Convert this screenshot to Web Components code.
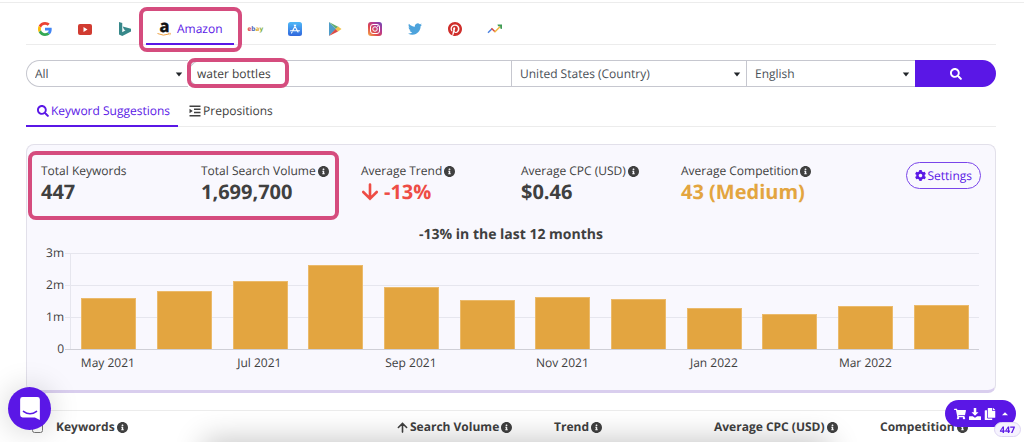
<!DOCTYPE html>
<html lang="en">
<head>
<meta charset="utf-8">
<title>Keyword research</title>
<style>
  html { scrollbar-width: none; }
  body { margin: 0; background: #fff; color: #404040; font: 12px/18px "Open Sans", sans-serif; text-rendering: geometricPrecision; overflow-x: hidden; }
</style>
</head>
<body>
<keyword-app></keyword-app>
<script>
const SEARCH = '<path fill="currentColor" d="M505 442.7L405.3 343c-4.5-4.5-10.6-7-17-7H372c27.6-35.3 44-79.7 44-128C416 93.1 322.9 0 208 0S0 93.1 0 208s93.1 208 208 208c48.3 0 92.7-16.4 128-44v16.3c0 6.4 2.5 12.5 7 17l99.7 99.7c9.4 9.4 24.6 9.4 33.9 0l28.3-28.3c9.4-9.4 9.4-24.6.1-34zM208 336c-70.7 0-128-57.2-128-128 0-70.7 57.2-128 128-128 70.7 0 128 57.2 128 128 0 70.7-57.2 128-128 128z"/>';
const ICONS = {
  google: ['0 0 48 48', '<path fill="#EA4335" d="M24 9.5c3.54 0 6.71 1.22 9.21 3.6l6.85-6.85C35.9 2.38 30.47 0 24 0 14.62 0 6.51 5.38 2.56 13.22l7.98 6.19C12.43 13.72 17.74 9.5 24 9.5z"/><path fill="#4285F4" d="M46.98 24.55c0-1.57-.15-3.09-.38-4.55H24v9.02h12.94c-.58 2.96-2.26 5.48-4.78 7.18l7.73 6c4.51-4.18 7.09-10.36 7.09-17.65z"/><path fill="#FBBC05" d="M10.53 28.59c-.48-1.45-.76-2.99-.76-4.59s.27-3.14.76-4.59l-7.98-6.19C.92 16.46 0 20.12 0 24c0 3.88.92 7.54 2.56 10.78l7.97-6.19z"/><path fill="#34A853" d="M24 48c6.48 0 11.93-2.13 15.89-5.81l-7.73-6c-2.15 1.45-4.92 2.3-8.16 2.3-6.26 0-11.57-4.22-13.47-9.91l-7.98 6.19C6.51 42.62 14.62 48 24 48z"/>'],
  youtube: ['0 0 28 28', '<rect y="4" width="28" height="22" rx="4" fill="#d13b31"/><path fill="#fff" d="M11 10v10l8-5z"/>'],
  bing: ['0 0 28 28', '<path fill="#37888a" d="M2 0l6.500 2v18.500l6.500-4-3-1.500-2.500-6L26 13.500V19L8.500 28 2 25z"/>'],
  amazon: ['0 0 28 28', '<text x="5" y="20" font-family="Open Sans" font-weight="700" font-size="33" fill="#111" stroke="#111">a</text><path d="M1 23q12 6 23 1" fill="none" stroke="#f0a345" stroke-width="2"/><path d="M22 22.500h5l-1.500 4" fill="none" stroke="#f0a345" stroke-width="1.500"/>'],
  ebay: ['0 0 28 28', '<text x="-1" y="18" font-family="Open Sans" font-weight="700" font-size="13"><tspan fill="#d8474d">e</tspan><tspan fill="#4a63b5">b</tspan><tspan fill="#dfae31">a</tspan><tspan fill="#7fae3f">y</tspan></text>'],
  appstore: ['0 0 28 28', '<defs><linearGradient id="g" x2="0" y2="1"><stop stop-color="#4fb8f7"/><stop offset="1" stop-color="#3067dd"/></linearGradient></defs><rect width="28" height="28" rx="5" fill="url(#g)"/><path d="M15.500 6L9 18M12.500 6l7.500 14M5 17.500h12M20 17.500h3M8 20.500l-1 1.500" stroke="#fff" stroke-width="2.200" stroke-linecap="round"/>'],
  play: ['0 0 28 28', '<path fill="#4f9dca" d="M2 0v28l14-14z"/><path fill="#63ad72" d="M2 0l19 10-5 4z"/><path fill="#f0c44c" d="M20 9l7 5-7 5-5-5z"/><path fill="#dc4b45" d="M2 28l18-9-5-5z"/>'],
  instagram: ['0 0 28 28', '<defs><linearGradient id="g" x1="0" y1="1" x2="1" y2="0"><stop stop-color="#f6b14c"/><stop offset=".35" stop-color="#e04a4d"/><stop offset=".65" stop-color="#b53a91"/><stop offset="1" stop-color="#6a49b8"/></linearGradient></defs><rect width="28" height="28" rx="6" fill="url(#g)"/><rect x="5" y="5" width="18" height="18" rx="5" fill="none" stroke="#fff" stroke-width="2"/><circle cx="14" cy="14" r="4.500" fill="none" stroke="#fff" stroke-width="2"/><circle cx="19.500" cy="8.500" r="1.300" fill="#fff"/>'],
  twitter: ['0 0 24 24', '<path fill="#4da3dc" d="M23.953 4.570a10 10 0 01-2.825.775 4.958 4.958 0 002.163-2.723c-.951.555-2.005.959-3.127 1.184a4.920 4.920 0 00-8.384 4.482C7.690 8.095 4.067 6.130 1.640 3.162a4.822 4.822 0 00-.666 2.475c0 1.710.870 3.213 2.188 4.096a4.904 4.904 0 01-2.228-.616v.060a4.923 4.923 0 003.946 4.827 4.996 4.996 0 01-2.212.085 4.936 4.936 0 004.604 3.417 9.867 9.867 0 01-6.102 2.105c-.390 0-.779-.023-1.170-.067a13.995 13.995 0 007.557 2.209c9.053 0 13.998-7.496 13.998-13.985 0-.210 0-.420-.015-.630A9.935 9.935 0 0024 4.590z"/>'],
  pinterest: ['0 8 496 496', '<path fill="#cf2e2b" d="M496 256c0 137-111 248-248 248-25.6 0-50.2-3.9-73.4-11.1 10.1-16.5 25.2-43.5 30.8-65 3-11.6 15.4-59 15.4-59 8.1 15.4 31.7 28.5 56.8 28.5 74.8 0 128.7-68.8 128.7-154.3 0-81.9-66.9-143.2-152.900-143.2-107 0-163.9 71.8-163.9 150.1 0 36.4 19.4 81.7 50.3 96.1 4.7 2.2 7.2 1.2 8.3-3.3.8-3.4 5-20.3 6.9-28.1.6-2.500.3-4.7-1.7-7.1-10.1-12.5-18.3-35.3-18.3-56.6 0-54.7 41.4-107.6 112-107.6 60.9 0 103.6 41.5 103.6 100.9 0 67.1-33.9 113.6-78 113.6-24.3 0-42.6-20.1-36.7-44.8 7-29.5 20.5-61.3 20.5-82.6 0-19-10.2-34.9-31.4-34.9-24.9 0-44.9 25.7-44.9 60.2 0 22 7.4 36.8 7.4 36.8s-24.5 103.8-29 123.2c-5 21.4-3 51.6-.9 71.2C65.4 450.9 0 361.1 0 256 0 119 111 8 248 8s248 111 248 248z"/>'],
  trends: ['0 0 28 28', '<g fill="none" stroke-width="3"><path stroke="#4a80e0" d="M0 21.500l8-8"/><path stroke="#dd4b3e" d="M7 12.500l7 7"/><path stroke="#efb83d" d="M13 20.500L25 8.500"/></g><path fill="#3f9c56" d="M19 5h9v9l-3.500-1v-4.500H20z"/>'],
  search: ['0 0 512 512', SEARCH],
  indent: ['0 0 24 24', '<path fill="currentColor" d="M1 1h22v3H1zM10 7h13v3H10zM10 13.500h13v3H10zM1 20h22v3H1zM1 7.500l6.500 4.500L1 16.500z"/>'],
  info: ['8 8 496 496', '<path fill="currentColor" d="M256 8C119.043 8 8 119.083 8 256c0 136.997 111.043 248 248 248s248-111.003 248-248C504 119.083 392.957 8 256 8zm0 110c23.196 0 42 18.804 42 42s-18.804 42-42 42-42-18.804-42-42 18.804-42 42-42zm56 254c0 6.627-5.373 12-12 12h-88c-6.627 0-12-5.373-12-12v-24c0-6.627 5.373-12 12-12h12v-64h-12c-6.627 0-12-5.373-12-12v-24c0-6.627 5.373-12 12-12h64c6.627 0 12 5.373 12 12v100h12c6.627 0 12 5.373 12 12v24z"/>'],
  cog: ['8 8 496 496', '<path fill="currentColor" d="M487.4 315.7l-42.6-24.6c4.3-23.2 4.3-47 0-70.2l42.6-24.6c4.9-2.8 7.1-8.6 5.5-14-11.1-35.6-30-67.8-54.7-94.6-3.8-4.1-10-5.1-14.8-2.3L380.8 110c-17.9-15.4-38.5-27.3-60.8-35.1V25.8c0-5.6-3.9-10.5-9.4-11.7-36.7-8.2-74.3-7.8-109.2 0-5.5 1.2-9.4 6.1-9.4 11.7V75c-22.2 7.9-42.8 19.8-60.8 35.1L88.7 85.5c-4.9-2.8-11-1.9-14.8 2.3-24.7 26.7-43.6 58.9-54.7 94.6-1.7 5.4.6 11.2 5.5 14L67.3 221c-4.3 23.2-4.3 47 0 70.2l-42.6 24.6c-4.9 2.8-7.1 8.6-5.5 14 11.1 35.6 30 67.8 54.7 94.6 3.8 4.1 10 5.1 14.8 2.3l42.6-24.6c17.9 15.4 38.5 27.3 60.8 35.1v49.2c0 5.6 3.9 10.5 9.4 11.7 36.7 8.2 74.3 7.8 109.2 0 5.5-1.2 9.4-6.1 9.4-11.7v-49.2c22.2-7.9 42.8-19.8 60.8-35.1l42.6 24.6c4.9 2.8 11 1.9 14.8-2.3 24.7-26.7 43.6-58.9 54.7-94.6 1.5-5.5-.7-11.3-5.6-14.1zM256 336c-44.1 0-80-35.9-80-80s35.9-80 80-80 80 35.9 80 80-35.9 80-80 80z"/>'],
  down: ['0 0 24 24', '<path d="M12 2v19M3 12l9 9 9-9" fill="none" stroke="currentColor" stroke-width="3.500" stroke-linecap="round"/>'],
  up: ['0 0 24 24', '<path d="M12 22V3M3 12l9-9 9 9" fill="none" stroke="currentColor" stroke-width="3.500" stroke-linecap="round"/>'],
  cart: ['0 0 576 512', '<path fill="currentColor" d="M528.12 301.319l47.273-208C578.806 78.301 567.391 64 551.99 64H159.208l-9.166-44.81C147.758 8.021 137.93 0 126.529 0H24C10.745 0 0 10.745 0 24v16c0 13.255 10.745 24 24 24h69.883l70.248 343.435C147.325 417.1 136 435.222 136 456c0 30.928 25.072 56 56 56s56-25.072 56-56c0-15.674-6.447-29.835-16.824-40h209.647C430.447 426.165 424 440.326 424 456c0 30.928 25.072 56 56 56s56-25.072 56-56c0-22.172-12.888-41.332-31.579-50.405l5.517-24.276c3.413-15.018-8.002-29.319-23.403-29.319H218.117l-6.545-32h293.145c11.206 0 20.92-7.754 23.403-18.681z"/>'],
  download: ['0 0 24 24', '<path fill="currentColor" d="M9.500 0h5v8.500H19l-7 7-7-7h4.500zM1 16.500h6.500l4.500 3 4.500-3H23a1 1 0 011 1V23a1 1 0 01-1 1H1a1 1 0 01-1-1v-5.500a1 1 0 011-1z"/>'],
  copy: ['0 0 448 512', '<path fill="currentColor" d="M320 448v40c0 13.255-10.745 24-24 24H24c-13.255 0-24-10.745-24-24V120c0-13.255 10.745-24 24-24h72v296c0 30.879 25.121 56 56 56h168zm0-344V0H152c-13.255 0-24 10.745-24 24v368c0 13.255 10.745 24 24 24h272c13.255 0 24-10.745 24-24V128H344c-13.2 0-24-10.8-24-24zm120.971-31.029L375.029 7.029A24 24 0 0 0 358.059 0H352v96h96v-6.059a24 24 0 0 0-7.029-16.97z"/>'],
  caretdown: ['0 0 10 10', '<path fill="#212529" d="M1 3h8L5 8z"/>'],
  caretup: ['0 0 10 10', '<path fill="currentColor" d="M0 7h10L5 2z"/>'],
  chat: ['0 0 24 28', '<path fill="#fff" d="M3 0h18a3 3 0 013 3v25l-6-3H3a3 3 0 01-3-3V3a3 3 0 013-3z"/><path d="M4 17.500q8 6 16 0" fill="none" stroke="#5a17e6" stroke-width="1.800" stroke-linecap="round"/>']
};

function define(name, html, setup) {
  const template = document.createElement('template');
  template.innerHTML = html;
  customElements.define(name, class extends HTMLElement {
    connectedCallback() {
      if (this.shadowRoot) return;
      this.attachShadow({ mode: 'open' }).append(template.content.cloneNode(true));
      if (setup) setup(this, this.shadowRoot);
    }
  });
}

define('kw-icon', `<style>
  :host { display: inline-block; width: 12px; height: 12px; flex: none; }
  svg { display: block; width: 100%; height: 100%; overflow: visible; }
</style><svg aria-hidden="true"></svg>`, (host, root) => {
  const [box, body] = ICONS[host.getAttribute('name')];
  const svg = root.querySelector('svg');
  svg.setAttribute('viewBox', box);
  svg.innerHTML = body;
});

/* Rounded outline drawn around the slotted content */
define('kw-highlight', `<style>
  :host { display: block; position: relative; }
  :host::after { content: ""; position: absolute; inset: var(--mark-inset); border: 4px solid #d54c7e; border-radius: 8px; pointer-events: none; z-index: 1; }
</style><slot></slot>`);

define('kw-engines', `<style>
  :host { display: block; border-top: 1px solid #ececec; padding: 12px 28px 0 26px; }
  nav { display: flex; gap: 2px; border-bottom: 1px solid #ececec; }
  a { box-sizing: border-box; display: flex; align-items: center; justify-content: center; gap: 6px; min-width: 38px; height: 30px; padding: 0 11px; border-bottom: 2px solid transparent; margin-bottom: -1px; color: #5a17e6; text-decoration: none; }
  a.on { border-color: #5a17e6; }
  kw-icon { width: 14px; height: 14px; }
  kw-highlight { --mark-inset: -8px -8px -8px -7px; }
</style>
<nav aria-label="Search engine">
  <a href="#google" aria-label="Google"><kw-icon name="google"></kw-icon></a>
  <a href="#youtube" aria-label="YouTube"><kw-icon name="youtube"></kw-icon></a>
  <a href="#bing" aria-label="Bing"><kw-icon name="bing"></kw-icon></a>
  <kw-highlight><a class="on" href="#amazon"><kw-icon name="amazon"></kw-icon>Amazon</a></kw-highlight>
  <a href="#ebay" aria-label="eBay"><kw-icon name="ebay"></kw-icon></a>
  <a href="#appstore" aria-label="App Store"><kw-icon name="appstore"></kw-icon></a>
  <a href="#play" aria-label="Google Play"><kw-icon name="play"></kw-icon></a>
  <a href="#instagram" aria-label="Instagram"><kw-icon name="instagram"></kw-icon></a>
  <a href="#twitter" aria-label="Twitter"><kw-icon name="twitter"></kw-icon></a>
  <a href="#pinterest" aria-label="Pinterest"><kw-icon name="pinterest"></kw-icon></a>
  <a href="#trends" aria-label="Google Trends"><kw-icon name="trends"></kw-icon></a>
</nav>`);

define('kw-search', `<style>
  :host { display: block; padding: 15px 28px 0 26px; }
  form { display: grid; grid-template-columns: 162fr 323fr 235fr 169fr 81fr; height: 27px; }
  .field { box-sizing: border-box; display: grid; align-items: center; height: 27px; border: 1px solid #c6c7cf; border-right: 0; min-width: 0; }
  .field:first-child { border-radius: 14px 0 0 14px; }
  kw-highlight .field { border-radius: 0; }
  select, input { grid-area: 1 / 1; box-sizing: border-box; width: 100%; height: 25px; margin: 0; padding: 0 8px; border: 0; outline: 0; background: none; appearance: none; color: #495057; font: inherit; text-rendering: inherit; }
  input { color: #404040; }
  .field kw-icon { grid-area: 1 / 1; justify-self: end; width: 8px; height: 8px; margin-right: 5px; pointer-events: none; }
  kw-highlight { --mark-inset: -2px auto -1px -1px; display: grid; }
  kw-highlight::after { width: 94px; }
  button { border: 0; padding: 0; border-radius: 0 14px 14px 0; background: #5a17e6; color: #fff; display: grid; place-items: center; }
</style>
<form onsubmit="return false">
  <div class="field"><select aria-label="Category"><option>All</option></select><kw-icon name="caretdown"></kw-icon></div>
  <kw-highlight><div class="field"><input aria-label="Keyword" value="water bottles"></div></kw-highlight>
  <div class="field"><select aria-label="Country"><option>United States (Country)</option></select><kw-icon name="caretdown"></kw-icon></div>
  <div class="field"><select aria-label="Language"><option>English</option></select><kw-icon name="caretdown"></kw-icon></div>
  <button aria-label="Search"><kw-icon name="search"></kw-icon></button>
</form>`);

define('kw-tabs', `<style>
  :host { display: block; padding: 9px 28px 0 26px; }
  nav { display: flex; border-bottom: 1px solid #ececec; }
  a { display: flex; align-items: center; gap: 2px; height: 29px; padding: 0 8px 0 11px; border-bottom: 2px solid transparent; margin-bottom: -1px; color: inherit; text-decoration: none; }
  a.on { color: #5a17e6; border-color: #5a17e6; }
</style>
<nav>
  <a class="on" href="#suggestions"><kw-icon name="search"></kw-icon>Keyword Suggestions</a>
  <a href="#prepositions"><kw-icon name="indent"></kw-icon>Prepositions</a>
</nav>`);

define('kw-stat', `<style>
  :host { display: block; white-space: nowrap; }
  .label { display: flex; align-items: center; gap: 2px; height: 18px; }
  .label kw-icon { width: 11px; height: 11px; }
  .value { font-size: 20px; line-height: 24px; font-weight: 700; }
</style>
<div class="label"><slot name="label"></slot></div><div class="value"><slot></slot></div>`, (host, root) => {
  if (host.hasAttribute('info')) {
    const icon = document.createElement('kw-icon');
    icon.setAttribute('name', 'info');
    root.querySelector('.label').append(icon);
  }
});

define('kw-chart', `<style>
  :host { display: block; }
  h2 { margin: 0; font-size: 14px; line-height: 20px; text-align: center; }
  .plot { display: grid; grid-template-columns: 24px 5px 1fr; margin-top: 8px; padding-right: 2px; }
  .y { display: grid; grid-template-rows: repeat(4, 32px); height: 128px; margin-bottom: -32px; text-align: right; line-height: 18px; padding-right: 1px; }
  .y span { margin-top: -9px; }
  .grid { grid-column: 2 / 4; grid-row: 1; height: 96px; display: grid; grid-template-rows: repeat(3, 32px); border-bottom: 1px solid #cfcfd6; }
  .grid i { border-top: 1px solid #e6e6ee; }
  .bars { grid-column: 3; grid-row: 1; height: 96px; display: grid; grid-template-columns: repeat(12, 1fr); align-items: end; border-left: 1px solid #e6e6ee; position: relative; }
  .bars i { justify-self: center; width: 73%; background: #e3a540; border: 1px solid #ebba6b; border-bottom: 0; box-sizing: border-box; }
  .x { grid-column: 3; display: grid; grid-template-columns: repeat(12, 1fr); justify-items: center; margin-top: 4px; white-space: nowrap; }
  .x span { width: 0; display: flex; justify-content: center; }
</style>
<h2>-13% in the last 12 months</h2>
<div class="plot">
  <div class="y"><span>3m</span><span>2m</span><span>1m</span><span>0</span></div>
  <div class="grid"><i></i><i></i><i></i></div>
  <div class="bars"></div>
  <div class="x"></div>
</div>`, (host, root) => {
  const volumes = [1.59, 1.82, 2.13, 2.64, 1.95, 1.52, 1.61, 1.55, 1.27, 1.1, 1.34, 1.39];
  const months = ['May 2021', '', 'Jul 2021', '', 'Sep 2021', '', 'Nov 2021', '', 'Jan 2022', '', 'Mar 2022', ''];
  volumes.forEach((v, n) => {
    const bar = document.createElement('i');
    bar.style.height = Math.round(v / 3 * 96) + 'px';
    root.querySelector('.bars').append(bar);
    const label = document.createElement('span');
    label.textContent = months[n];
    root.querySelector('.x').append(label);
  });
});

define('kw-summary', `<style>
  :host { display: block; margin: 17px 28px 0 26px; padding: 17px 14px 18px; border: 1px solid #e2e0ea; border-bottom: 3px solid #d9ceee; border-radius: 8px; background: #f9f8fe; }
  .top { display: flex; justify-content: space-between; align-items: flex-start; }
  .stats { display: grid; grid-template-columns: 320px repeat(3, 160px); }
  .pair { display: grid; grid-template-columns: repeat(2, 160px); }
  kw-highlight { --mark-inset: -11px 22px -16px -13px; }
  .red { color: #ee4c45; }
  .amber { color: #e3a540; }
  .red kw-icon { width: 18px; height: 18px; vertical-align: -2px; margin-right: 5px; }
  button { display: flex; align-items: center; gap: 2px; height: 27px; padding: 0 8px; border: 1px solid #7a45ea; border-radius: 14px; background: none; color: #5a17e6; font: inherit; text-rendering: inherit; }
  button kw-icon { width: 11px; height: 11px; }
  kw-chart { margin-top: 21px; }
</style>
<div class="top">
  <div class="stats">
    <kw-highlight><div class="pair">
      <kw-stat><span slot="label">Total Keywords</span>447</kw-stat>
      <kw-stat info><span slot="label">Total Search Volume</span>1,699,700</kw-stat>
    </div></kw-highlight>
    <kw-stat info><span slot="label">Average Trend</span><span class="red"><kw-icon name="down"></kw-icon>-13%</span></kw-stat>
    <kw-stat info><span slot="label">Average CPC (USD)</span>$0.46</kw-stat>
    <kw-stat info><span slot="label">Average Competition</span><span class="amber">43 (Medium)</span></kw-stat>
  </div>
  <button><kw-icon name="cog"></kw-icon>Settings</button>
</div>
<kw-chart></kw-chart>`);

define('kw-table', `<style>
  :host { display: block; margin: 17px 28px 0 26px; }
  table { width: 100%; table-layout: fixed; border-collapse: collapse; border-top: 1px solid #ececec; }
  th { padding: 0; height: 32px; text-align: left; font-weight: 700; white-space: nowrap; }
  th div { display: flex; align-items: center; gap: 2px; }
  kw-icon { width: 11px; height: 11px; }
  input { display: block; width: 11px; height: 11px; margin: 0 0 0 6px; }
  .c0 { width: 30px; } .c2 { width: 157px; } .c3 { width: 160px; } .c4 { width: 166px; } .c5 { width: 116px; }
</style>
<table>
  <colgroup><col class="c0"><col><col class="c2"><col class="c3"><col class="c4"><col class="c5"></colgroup>
  <thead><tr>
    <th><input type="checkbox" aria-label="Select all"></th>
    <th><div>Keywords <kw-icon name="info"></kw-icon></div></th>
    <th><div><kw-icon name="up"></kw-icon>Search Volume <kw-icon name="info"></kw-icon></div></th>
    <th><div>Trend <kw-icon name="info"></kw-icon></div></th>
    <th><div>Average CPC (USD) <kw-icon name="info"></kw-icon></div></th>
    <th><div>Competition <kw-icon name="info"></kw-icon></div></th>
  </tr></thead>
</table>`);

/* Launcher and action pill floating over the page */
define('kw-floating', `<style>
  .fade { position: fixed; left: 210px; right: 200px; bottom: -24px; height: 20px; box-shadow: 0 0 30px 6px rgba(0,0,0,.24); pointer-events: none; }
  button { border: 0; padding: 0; background: #5a17e6; color: #fff; }
  .chat { position: fixed; left: 8px; bottom: 12px; width: 43px; height: 43px; border-radius: 50%; display: grid; place-items: center; box-shadow: 0 1px 30px rgba(0,0,0,.18); }
  .chat kw-icon { width: 20px; height: 23px; }
  .actions { position: fixed; right: 8px; bottom: 15px; width: 71px; height: 27px; border-radius: 14px; display: flex; align-items: center; justify-content: center; gap: 3px; }
  .actions kw-icon { width: 12px; height: 12px; }
  .actions kw-icon:last-child { width: 6px; height: 6px; margin-left: 3px; }
  .count { position: fixed; right: 3px; bottom: 5px; width: 27px; height: 15px; border-radius: 8px; background: #f6f3fe; border: 1px solid #ddd5f2; box-sizing: border-box; color: #5a17e6; font-size: 9px; line-height: 13px; font-weight: 700; text-align: center; }
</style>
<div class="fade"></div>
<button class="chat" aria-label="Open chat"><kw-icon name="chat"></kw-icon></button>
<button class="actions" aria-label="Actions for selected keywords"><kw-icon name="cart"></kw-icon><kw-icon name="download"></kw-icon><kw-icon name="copy"></kw-icon><kw-icon name="caretup"></kw-icon></button>
<div class="count">447</div>`);

define('keyword-app', `<style>:host { display: block; padding-top: 2px; }</style>
<kw-engines></kw-engines>
<kw-search></kw-search>
<kw-tabs></kw-tabs>
<kw-summary></kw-summary>
<kw-table></kw-table>
<kw-floating></kw-floating>`);
</script>
</body>
</html>
